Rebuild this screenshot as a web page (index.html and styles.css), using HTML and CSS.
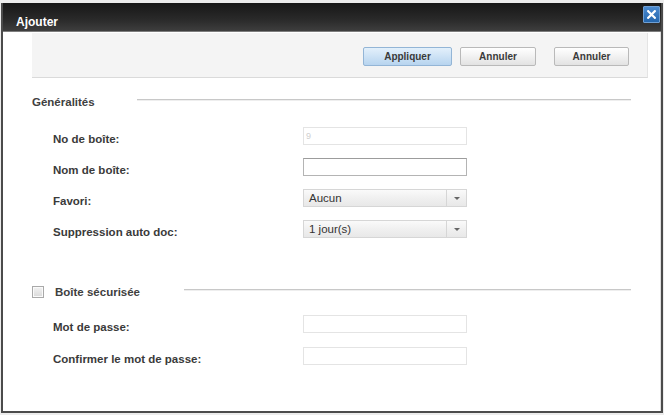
FILE: index.html
```html
<!DOCTYPE html>
<html lang="fr">
<head>
<meta charset="utf-8">
<title>Ajouter</title>
<link rel="stylesheet" href="styles.css">
</head>
<body>
<div class="dialog">
  <div class="titlebar">
    <span class="title">Ajouter</span>
    <button class="close" aria-label="Fermer">
      <svg width="9" height="9" viewBox="0 0 9 9"><path d="M1.2 1.2 L7.8 7.8 M7.8 1.2 L1.2 7.8" stroke="#fff" stroke-width="2.2" stroke-linecap="square"/></svg>
    </button>
  </div>
  <div class="content">
    <div class="toolbar">
      <button class="btn btn-primary">Appliquer</button>
      <button class="btn">Annuler</button>
      <button class="btn btn-last">Annuler</button>
    </div>

    <section class="section section-general">
      <div class="heading">
        <span class="heading-text heading-general">Généralités</span>
        <span class="rule"></span>
      </div>
      <div class="form form-general">
        <label class="label">No de boîte:</label>
        <div class="field field-disabled"><span class="placeholder">9</span></div>
        <label class="label">Nom de boîte:</label>
        <div class="field field-active"></div>
        <label class="label">Favori:</label>
        <div class="select"><span class="select-value">Aucun</span><span class="select-arrow"><span class="tri"></span></span></div>
        <label class="label">Suppression auto doc:</label>
        <div class="select"><span class="select-value">1 jour(s)</span><span class="select-arrow"><span class="tri"></span></span></div>
      </div>
    </section>

    <section class="section section-secure">
      <div class="heading">
        <span class="checkbox"></span>
        <span class="heading-text heading-secure">Boîte sécurisée</span>
        <span class="rule"></span>
      </div>
      <div class="form form-secure">
        <label class="label">Mot de passe:</label>
        <div class="field field-disabled"></div>
        <label class="label">Confirmer le mot de passe:</label>
        <div class="field field-disabled"></div>
      </div>
    </section>
  </div>
</div>
</body>
</html>
```

FILE: styles.css
```css
html, body {
  margin: 0;
  padding: 0;
}
body {
  width: 664px;
  height: 415px;
  overflow: hidden;
  background: #ececec;
  font-family: "Liberation Sans", Arial, sans-serif;
}
.dialog {
  margin: 3px 1px 0 1px;
  width: 662px;
  height: 410px;
  box-sizing: border-box;
  border-left: 2px solid #4b4b4b;
  border-right: 2px solid #4b4b4b;
  border-bottom: 2px solid #4b4b4b;
  background: #fff;
  display: flex;
  flex-direction: column;
}
.titlebar {
  height: 28px;
  flex: none;
  background: linear-gradient(#171717, #2a2a2a 60%, #3e3e3e);
  border-bottom: 1px solid #7d7d7d;
  display: flex;
  justify-content: space-between;
  align-items: flex-start;
  padding-left: 13px;
  padding-right: 1px;
}
.title {
  color: #fff;
  font-weight: bold;
  font-size: 12px;
  line-height: 14px;
  margin-top: 12px;
}
.close {
  margin-top: 3px;
  width: 17px;
  height: 17px;
  padding: 0;
  border: 1px solid #6f9fd3;
  border-radius: 1px;
  background: linear-gradient(#4a8ad0, #2466ad);
  display: flex;
  align-items: center;
  justify-content: center;
}
.close svg { display: block; }
.content {
  flex: 1;
  border-right: 1px solid #dedede;
  padding-top: 1px;
}
.toolbar {
  margin-left: 29px;
  width: 616px;
  height: 45px;
  box-sizing: border-box;
  background: #f4f4f4;
  border-bottom: 1px solid #dadada;
  border-right: 1px solid #e4e4e4;
  display: flex;
  justify-content: flex-end;
  align-items: flex-start;
  padding-top: 14px;
  padding-right: 18px;
}
.btn {
  height: 19px;
  box-sizing: border-box;
  padding: 0;
  border: 1px solid #b9b9b9;
  border-radius: 2px;
  background: linear-gradient(#ffffff, #f1f1f1 50%, #e2e2e2);
  font-family: "Liberation Sans", Arial, sans-serif;
  font-weight: bold;
  font-size: 10px;
  color: #3a3a3a;
  width: 76px;
  margin-left: 8px;
}
.btn-primary {
  width: 89px;
  margin-left: 0;
  border-color: #93b5d6;
  background: linear-gradient(#e3f0fb, #cde2f5 50%, #b7d4ef);
}
.btn-last {
  width: 75px;
  margin-left: 18px;
}
.section {
  padding-left: 29px;
  padding-right: 29px;
}
.section-general { margin-top: 17px; }
.section-secure { margin-top: 47px; }
.heading {
  height: 14px;
  display: flex;
  align-items: center;
}
.heading-text {
  font-weight: bold;
  font-size: 11.5px;
  line-height: 14px;
  color: #404040;
  flex: none;
}
.heading-general { width: 105px; }
.heading-secure { width: 129px; }
.checkbox {
  width: 10px;
  height: 10px;
  flex: none;
  border: 1px solid #a9a9a9;
  background: linear-gradient(#f2f2f2, #d9d9d9);
  margin-right: 11px;
  box-shadow: inset 0 0 0 1px #fafafa;
}
.rule {
  flex: 1;
  height: 0;
  border-top: 1px solid #c8c8c8;
  border-bottom: 1px solid #eeeeee;
  margin-bottom: 4px;
}
.form {
  display: grid;
  grid-template-columns: 250px 164px;
  grid-auto-rows: 18px;
  padding-left: 21px;
  align-items: start;
}
.form-general {
  margin-top: 18px;
  row-gap: 13px;
}
.form-secure {
  margin-top: 16px;
  row-gap: 14px;
}
.label {
  font-weight: bold;
  font-size: 11.5px;
  line-height: 18px;
  color: #3a3a3a;
  padding-top: 3px;
  white-space: nowrap;
}
.field {
  height: 18px;
  box-sizing: border-box;
  background: #fff;
  border: 1px solid #e4e4e4;
  display: flex;
  align-items: center;
}
.field-active {
  border-color: #b4b4b4;
  border-top-color: #9c9c9c;
}
.placeholder {
  font-size: 9px;
  color: #cfcfcf;
  padding-left: 2px;
}
.select {
  height: 18px;
  box-sizing: border-box;
  border: 1px solid #d6d6d6;
  background: linear-gradient(#fafafa, #f0f0f0 50%, #e8e8e8);
  display: flex;
  align-items: stretch;
}
.select-value {
  flex: 1;
  font-size: 11.5px;
  line-height: 16px;
  color: #333;
  padding-left: 5px;
}
.select-arrow {
  width: 19px;
  border-left: 1px solid #d6d6d6;
  display: flex;
  align-items: center;
  justify-content: center;
}
.tri {
  width: 0;
  height: 0;
  border-left: 3px solid transparent;
  border-right: 3px solid transparent;
  border-top: 3px solid #666;
}
```
